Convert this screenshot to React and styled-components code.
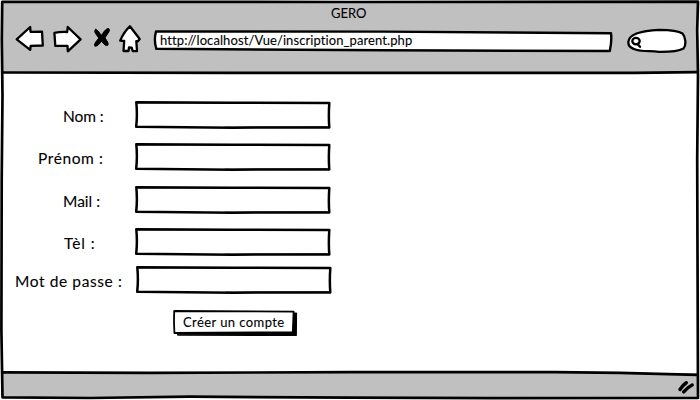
import React from "react";
import styled, { createGlobalStyle } from "styled-components";

const GlobalStyle = createGlobalStyle`
  * { box-sizing: border-box; }
  body { margin: 0; background: #fff; overflow: hidden; }
`;

const Window = styled.div`
  position: relative;
  display: flex;
  flex-direction: column;
  width: 700px;
  height: 400px;
  padding: 2px 3px 3px;
  background: #fff;
  color: #000;
  font-family: Lato, "Open Sans", sans-serif;
  -webkit-text-stroke: 0.1px #000;
`;

const Header = styled.header`
  height: 71px;
  background: #c0c0c0;
`;

const Title = styled.div`
  height: 22px;
  padding-left: 328px;
  font-size: 13px;
  line-height: 22px;
  letter-spacing: ${(p) => p.$spacing}px;
  white-space: nowrap;
`;

const Toolbar = styled.div`
  display: flex;
  align-items: flex-start;
  height: 49px;
  padding-left: 11px;
`;

const Nav = styled.nav`
  width: 139px;
  height: 30px;
`;

const Sketch = styled.svg`
  position: absolute;
  inset: 0;
  width: 100%;
  height: 100%;
  overflow: visible;
  pointer-events: none;
  fill: ${(p) => p.$fill || "none"};
  stroke: #000;
  stroke-width: ${(p) => p.$weight || 2.5};
  stroke-linejoin: round;
  stroke-linecap: round;
`;

const Icons = styled.svg`
  display: block;
  fill: #fff;
  stroke: #000;
  stroke-width: 2.3;
  stroke-linejoin: round;
  stroke-linecap: round;
`;

const AddressBar = styled.div`
  position: relative;
  width: 460px;
  height: 22px;
  margin: 6px 0 0 0;
  padding-left: 7px;
`;

const Address = styled.span`
  position: relative;
  display: block;
  font-size: 13px;
  line-height: 21px;
  letter-spacing: ${(p) => p.$spacing}px;
  white-space: nowrap;
`;

const Search = styled.div`
  width: 62px;
  height: 26px;
  margin: 4px 0 0 13px;
`;

const Content = styled.main`
  flex: 1;
  padding: 28px 0 0 12px;
`;

const Row = styled.div`
  display: flex;
  align-items: center;
  height: 28px;
  margin-bottom: ${(p) => p.$gap}px;
`;

const Label = styled.label`
  width: 120px;
  padding: 1px 0 0 ${(p) => p.$indent}px;
  font-size: 15.5px;
  line-height: 28px;
  letter-spacing: ${(p) => p.$spacing}px;
  white-space: nowrap;
`;

const Field = styled.div`
  position: relative;
  width: 196px;
  height: 28px;
  margin-left: ${(p) => p.$shift || 0}px;
`;

const Submit = styled.button`
  position: relative;
  display: block;
  width: 124px;
  height: 26px;
  margin: 0 0 0 158px;
  padding: 0 0 2px 10px;
  border: 0;
  background: transparent;
  color: #000;
  font: 13px/24px Lato, "Open Sans", sans-serif;
  letter-spacing: ${(p) => p.$spacing}px;
  text-align: left;
  white-space: nowrap;
`;

const ButtonText = styled.span`
  position: relative;
`;

const Footer = styled.footer`
  display: flex;
  justify-content: flex-end;
  height: 24px;
  padding: 6px 1px 0 0;
  background: #c0c0c0;
`;

const fields = [
  { label: "Nom :", indent: 48, gap: 14, spacing: -0.1 },
  { label: "Prénom :", indent: 23, gap: 15, spacing: 0.6 },
  { label: "Mail :", indent: 48, gap: 14, spacing: 0 },
  { label: "Tèl :", indent: 49, gap: 10, spacing: 0.9 },
  { label: "Mot de passe :", indent: 0, gap: 16, spacing: 0.6, shift: 0.8 },
];

function NavIcons() {
  return (
    <Icons width="130" height="30" viewBox="14 22 130 30" aria-hidden="true">
      <path d="M16.7 37.4L30.2 25L30.5 29.8L42 29.6L42.8 43.5L30.7 43.8L30.2 47.8Z" />
      <path d="M54.4 30.8Q60 29.7 67.2 30L67.7 25L80.6 37.4L67.8 49.3L67.5 43.9L55.3 43.9Z" />
      <path
        d="M95.8 27.4C98.5 28.3 99.8 31.6 101.5 33.3C103.3 30.7 105 27.4 107.7 26.6C109.9 26.2 109.7 28.3 108.8 30L105 35.8L108 40.8C108.7 43.5 107.2 44.3 105 43L101.4 39.2C99.6 41.5 98 44 95.5 44.3C93.7 44.4 94.6 41.7 95.6 40.2L98.8 36L95.3 31.2C94.4 29.3 94.5 27.2 95.8 27.4Z"
        fill="#000"
        strokeWidth="1"
      />
      <path d="M129.9 24.3L139.7 37L137.9 39.3L136.3 39.2L137 49.2L132.7 49L131.7 45.6L129 45.5L128.5 49L123.5 49L124.2 39L120.2 38.6Q124 29.5 129.9 24.3Z" />
    </Icons>
  );
}

function SketchField({ shift }) {
  return (
    <Field $shift={shift}>
      <Sketch viewBox="0 0 196 28" $fill="#fff" $weight="2.5" aria-hidden="true">
        <path d="M1.3 1.2Q50 1.2 98 1.8Q146 2 194.3 2.1Q193.4 15 194.3 26.5Q147 26.3 98 26.8Q45 26.4 1.2 25.7Q2.5 14 1.3 1.2Z" />
        <path d="M3 1.7L100 2.2M90 26.2L192 25.9" strokeWidth="1" />
      </Sketch>
    </Field>
  );
}

export default function App() {
  return (
    <>
      <GlobalStyle />
      <Window>
        <Header>
          <Title $spacing={0}>GERO</Title>
          <Toolbar>
            <Nav><NavIcons /></Nav>
            <AddressBar>
              <Sketch viewBox="0 0 460 22" $fill="#fff" $weight="2.4" aria-hidden="true">
                <path d="M3 1.5Q115 2 230 1.6Q350 2 458 3.3Q459 11 456.8 21Q350 20.8 230 20.3Q110 19.5 3.3 18.8Q.6 10 3 1.5Z" />
              </Sketch>
              <Address $spacing={0.09}>http://localhost/Vue/inscription_parent.php</Address>
            </AddressBar>
            <Search>
              <Icons width="62" height="26" viewBox="626 28 62 26" aria-label="Search">
                <path d="M628.5 41C629.5 34 642 30.7 659 29.8C672 30 679 31.2 682.5 33.5C685.7 37 686.5 45 683.5 48.5C678 51.5 669 52 659 51.9C651 51 642 51.3 637 50C631 48.5 627.5 45.5 628.5 41Z" />
                <ellipse cx="636" cy="41.1" rx="3.7" ry="3.2" />
                <path d="M637.5 43.9L640 46.8" />
              </Icons>
            </Search>
          </Toolbar>
        </Header>
        <Content>
          {fields.map((f) => (
            <Row key={f.label} $gap={f.gap}>
              <Label $indent={f.indent} $spacing={f.spacing}>{f.label}</Label>
              <SketchField shift={f.shift} />
            </Row>
          ))}
          <Submit $spacing={0.42}>
            <Sketch viewBox="0 0 124 26" $fill="#fff" $weight="1.8" aria-hidden="true">
              <path d="M5 4L123.2 3.5L123 25.2L5 24.8Z" fill="#000" />
              <path d="M1.2 1L120.6 1.6L119.8 22.2L1.4 23L1 12Z" />
            </Sketch>
            <ButtonText>Créer un compte</ButtonText>
          </Submit>
        </Content>
        <Footer>
          <Icons width="20" height="16" viewBox="676 379 20 16" aria-hidden="true">
            <path d="M680 389.5Q683 385 686.3 382.8M683.7 391.8Q688 387 692.2 385" strokeWidth="3.5" />
          </Icons>
        </Footer>
        <Sketch viewBox="0 0 700 400" $weight="2.7" aria-hidden="true">
          <path d="M2.2 1.8L350 2L698 1.7L697.2 30L698 75L697.2 160L698 398L490 398.2L350 397.7L190 396.6L90 398L2.5 397.3L1.4 330L1.7 180L2.5 95L1.8 40Z" />
          <path d="M3 72.5L230 72.8L420 72.8L635 72.8L697 72.2" />
          <path d="M3 372.4L150 372.8L350 372.2L555 372.1L620 372.8L697 374.8" />
        </Sketch>
      </Window>
    </>
  );
}
